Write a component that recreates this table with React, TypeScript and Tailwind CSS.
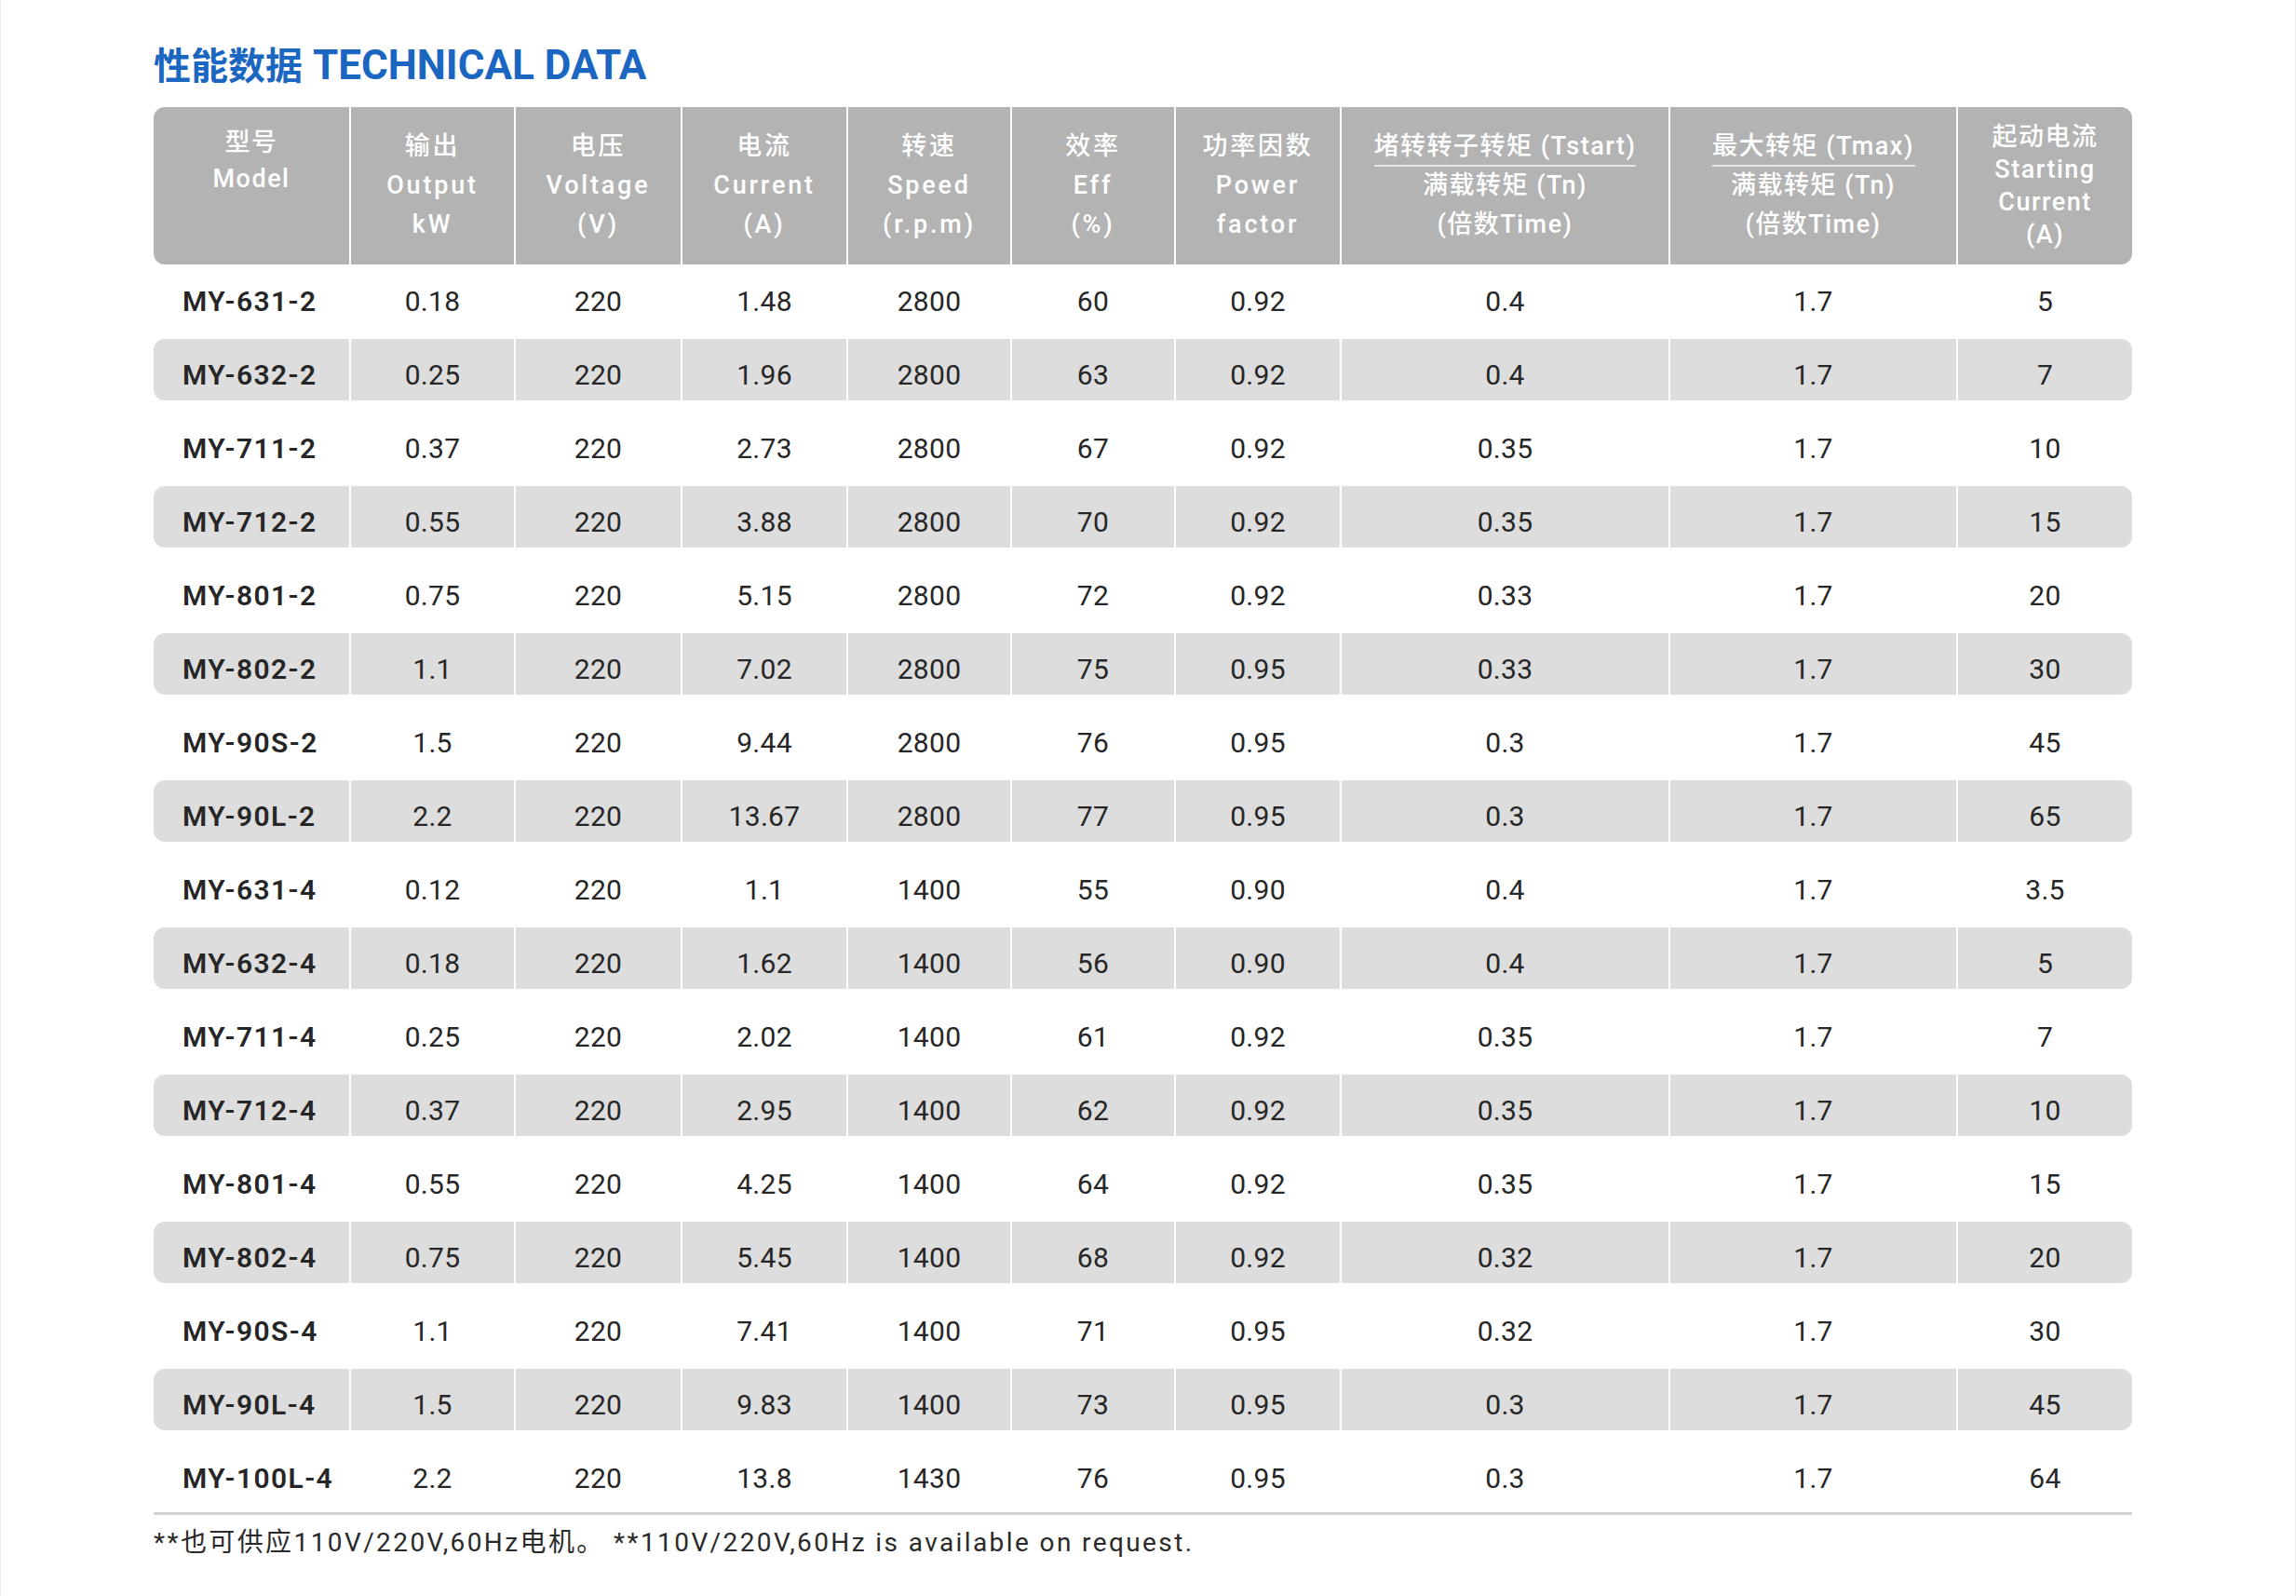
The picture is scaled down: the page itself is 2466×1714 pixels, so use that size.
import React from "react";

const rows: string[][] = [
  ["MY-631-2", "0.18", "220", "1.48", "2800", "60", "0.92", "0.4", "1.7", "5"],
  ["MY-632-2", "0.25", "220", "1.96", "2800", "63", "0.92", "0.4", "1.7", "7"],
  ["MY-711-2", "0.37", "220", "2.73", "2800", "67", "0.92", "0.35", "1.7", "10"],
  ["MY-712-2", "0.55", "220", "3.88", "2800", "70", "0.92", "0.35", "1.7", "15"],
  ["MY-801-2", "0.75", "220", "5.15", "2800", "72", "0.92", "0.33", "1.7", "20"],
  ["MY-802-2", "1.1", "220", "7.02", "2800", "75", "0.95", "0.33", "1.7", "30"],
  ["MY-90S-2", "1.5", "220", "9.44", "2800", "76", "0.95", "0.3", "1.7", "45"],
  ["MY-90L-2", "2.2", "220", "13.67", "2800", "77", "0.95", "0.3", "1.7", "65"],
  ["MY-631-4", "0.12", "220", "1.1", "1400", "55", "0.90", "0.4", "1.7", "3.5"],
  ["MY-632-4", "0.18", "220", "1.62", "1400", "56", "0.90", "0.4", "1.7", "5"],
  ["MY-711-4", "0.25", "220", "2.02", "1400", "61", "0.92", "0.35", "1.7", "7"],
  ["MY-712-4", "0.37", "220", "2.95", "1400", "62", "0.92", "0.35", "1.7", "10"],
  ["MY-801-4", "0.55", "220", "4.25", "1400", "64", "0.92", "0.35", "1.7", "15"],
  ["MY-802-4", "0.75", "220", "5.45", "1400", "68", "0.92", "0.32", "1.7", "20"],
  ["MY-90S-4", "1.1", "220", "7.41", "1400", "71", "0.95", "0.32", "1.7", "30"],
  ["MY-90L-4", "1.5", "220", "9.83", "1400", "73", "0.95", "0.3", "1.7", "45"],
  ["MY-100L-4", "2.2", "220", "13.8", "1430", "76", "0.95", "0.3", "1.7", "64"],
];

const gridCols =
  "grid grid-cols-[210px_175px_177px_176px_174px_174px_176px_351px_307px_187px] gap-x-[2px]";

function HeaderCell({ lines }: { lines: string[] }) {
  return (
    <div className="flex flex-col items-center bg-[#b3b3b3] pt-[21px] text-[27px] font-medium leading-[42px] tracking-[2.8px] text-white">
      {lines.map((l, i) => (
        <span key={i}>{l}</span>
      ))}
    </div>
  );
}

export default function App() {
  return (
    <div className="h-[1714px] w-[2466px] border-x border-[#ececec] bg-white pl-[164px] font-['Roboto','Noto_Sans_CJK_SC',sans-serif]">
      <div className="pt-[46px] text-[44px] font-bold leading-[48px] text-[#1a66c0]">
        <span className="text-[40px]">性能数据</span> TECHNICAL DATA
      </div>

      <div className="mt-[19px] w-[2125px]">
        {/* header */}
        <div className={`${gridCols} h-[169px]`}>
          <div className="flex flex-col items-center rounded-l-[12px] bg-[#b3b3b3] pt-[19px] text-[27px] font-medium leading-[39px] tracking-[1.5px] text-white">
            <span>型号</span>
            <span>Model</span>
          </div>
          <HeaderCell lines={["输出", "Output", "kW"]} />
          <HeaderCell lines={["电压", "Voltage", "(V)"]} />
          <HeaderCell lines={["电流", "Current", "(A)"]} />
          <HeaderCell lines={["转速", "Speed", "(r.p.m)"]} />
          <HeaderCell lines={["效率", "Eff", "(%)"]} />
          <HeaderCell lines={["功率因数", "Power", "factor"]} />
          <div className="flex flex-col items-center bg-[#b3b3b3] pt-[21px] text-[27px] font-medium leading-[42px] tracking-[1.5px] text-white">
            <span>堵转转子转矩 (Tstart)</span>
            <div className="-my-[1px] h-[2px] w-[281px] bg-[#e6e6e6]" />
            <span>满载转矩 (Tn)</span>
            <span>(倍数Time)</span>
          </div>
          <div className="flex flex-col items-center bg-[#b3b3b3] pt-[21px] text-[27px] font-medium leading-[42px] tracking-[1.5px] text-white">
            <span>最大转矩 (Tmax)</span>
            <div className="-my-[1px] h-[2px] w-[218px] bg-[#e6e6e6]" />
            <span>满载转矩 (Tn)</span>
            <span>(倍数Time)</span>
          </div>
          <div className="flex flex-col items-center justify-center rounded-r-[12px] bg-[#b3b3b3] text-[27px] font-medium leading-[35px] tracking-[1.5px] text-white">
            <span>起动电流</span>
            <span>Starting</span>
            <span>Current</span>
            <span>(A)</span>
          </div>
        </div>

        {/* body */}
        <div className="mt-[1px] flex flex-col gap-y-[13px]">
          {rows.map((r, ri) => {
            const gray = ri % 2 === 1;
            return (
              <div key={ri} className={`${gridCols} h-[66px]`}>
                {r.map((c, ci) => (
                  <div
                    key={ci}
                    className={`flex items-center pt-[11px] text-[30px] text-[#262626] ${
                      ci === 0
                        ? "justify-start pl-[31px] font-semibold tracking-[1.4px]"
                        : "justify-center tracking-[0.3px]"
                    } ${gray ? "bg-[#dddddd]" : ""} ${
                      gray && ci === 0 ? "rounded-l-[12px]" : ""
                    } ${gray && ci === 9 ? "rounded-r-[12px]" : ""}`}
                  >
                    {c}
                  </div>
                ))}
              </div>
            );
          })}
        </div>

        <div className="mt-[9px] h-[3px] w-[2125px] bg-[#d2d2d2]" />
        <div className="mt-[14px] text-[28px] leading-[32px] tracking-[2.4px] text-[#2a2a2a]">
          **也可供应110V/220V,60Hz电机。 **110V/220V,60Hz is available on request.
        </div>
      </div>
    </div>
  );
}
